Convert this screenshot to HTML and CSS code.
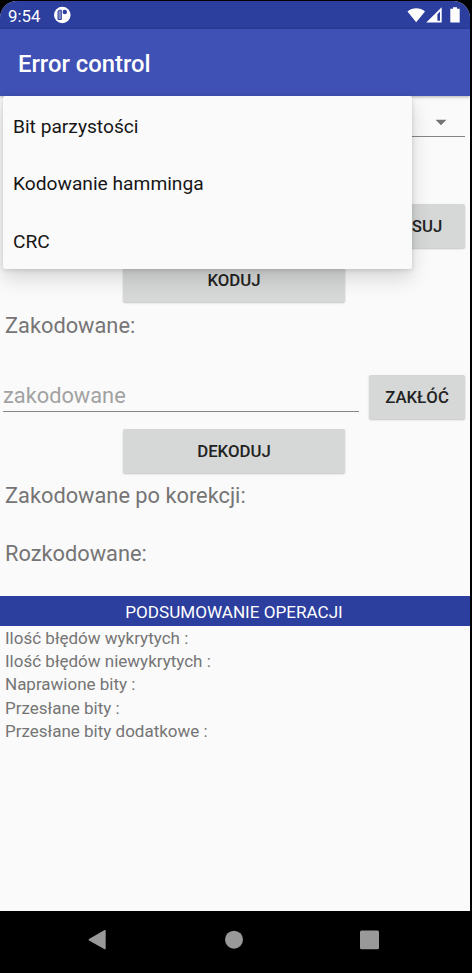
FILE: index.html
```html
<!DOCTYPE html>
<html lang="pl">
<head>
<meta charset="utf-8">
<title>Error control</title>
<link rel="stylesheet" href="styles.css">
</head>
<body>
<div class="device">
  <div class="screen">
    <header class="status">
      <span class="clock">9:54</span>
      <svg class="notice" width="18" height="18" viewBox="0 0 18 18"><circle cx="9.300" cy="9" r="8.300" fill="#fff"/><path d="M8.300 4.200H6.500Q5 4.200 5 6V13.500H8.300Z" fill="#8791c6" stroke="#2c3e9e" stroke-width="1"/><circle cx="11.800" cy="6" r="2.200" fill="#2c3e9e"/></svg>
      <svg class="signals" width="54" height="18" viewBox="0 0 54 18"><path d="M.5 5.500C5.500 1.200 13 1.200 18 5.500L9.200 16.200Z" fill="#fff"/><path d="M19.200 16.400 34.700 1.300V16.400ZM30.400 8.200V14.800H33V5.500Z" fill="#fff" fill-rule="evenodd"/><path d="M43.300 2.800H46V1.200H50V2.800H52.700V16.400H43.300Z" fill="#fff"/></svg>
    </header>
    <div class="appbar"><h1>Error control</h1></div>
    <main class="content">
      <div class="spinner"><svg width="12" height="7" viewBox="0 0 12 7"><path d="M.5.800H11.500L6 6.300Z" fill="#757575"/></svg></div>
      <div class="actions"><button class="btn side">LOSUJ</button></div>
      <button class="btn wide">KODUJ</button>
      <p class="label encoded">Zakodowane:</p>
      <div class="entry"><div class="field">zakodowane</div><button class="btn side">ZAKŁÓĆ</button></div>
      <button class="btn wide">DEKODUJ</button>
      <p class="label corrected">Zakodowane po korekcji:</p>
      <p class="label decoded">Rozkodowane:</p>
      <h2>PODSUMOWANIE OPERACJI</h2>
      <ul class="summary">
        <li>Ilość błędów wykrytych :</li>
        <li>Ilość błędów niewykrytych :</li>
        <li>Naprawione bity :</li>
        <li>Przesłane bity :</li>
        <li>Przesłane bity dodatkowe :</li>
      </ul>
      <ul class="menu">
        <li>Bit parzystości</li>
        <li>Kodowanie hamminga</li>
        <li>CRC</li>
      </ul>
    </main>
  </div>
  <nav class="navbar">
    <svg width="472" height="61" viewBox="0 0 472 61" fill="#999"><path d="M89 28 104.600 19.100Q105.700 18.700 105.700 19.800V37.500Q105.700 38.600 104.600 38.200L89 29.400Q88.100 28.700 89 28Z"/><circle cx="234" cy="28.700" r="9"/><rect x="360" y="19.500" width="19" height="18.700" rx="1.500"/></svg>
  </nav>
</div>
</body>
</html>
```
FILE: styles.css
```css
* { box-sizing: border-box; }
body { margin: 0; background: #000; font-family: Roboto, sans-serif; }
h1, h2, p, ul { margin: 0; padding: 0; list-style: none; }
.device { width: 472px; height: 973px; padding-top: 1px; overflow: hidden; background: #000; display: flex; flex-direction: column; }
.screen { width: 470px; height: 910px; background: #fafafa; border-radius: 17px 17px 0 0; overflow: hidden; display: flex; flex-direction: column; flex: none; }
.status { height: 28px; flex: none; background: #2c3e9e; display: flex; align-items: center; padding: 0 9px 0 8px; color: #fff; }
.clock { font-size: 16.800px; width: 45px; padding-top: 1px; }
.notice { display: block; }
.signals { display: block; margin-left: auto; }
.appbar { height: 67px; flex: none; background: #4051b5; padding: 3px 0 0 18px; display: flex; align-items: center; color: #fff; position: relative; box-shadow: 0 1px 3px rgba(0,0,0,.3); }
h1 { font-size: 23.800px; font-weight: 500; line-height: 28px; }
.content { position: relative; flex: 1; display: flex; flex-direction: column; padding-top: 1px; }
.spinner { height: 40px; margin: 0 5px; border-bottom: 1px solid #858585; display: flex; justify-content: flex-end; align-items: center; padding: 12px 18px 0 0; }
.actions { display: flex; justify-content: flex-end; margin: 67px 5px 10px; }
.btn { display: block; flex: none; height: 44px; padding: 0; border: 0; border-radius: 2px; background: #d6d8d7; color: #222; font: 500 16.800px/44px Roboto, sans-serif; text-align: center; box-shadow: 0 1px 2px rgba(0,0,0,.22); }
.side { width: 96px; }
.wide { width: 222px; margin-left: 123px; line-height: 45px; }
.label { padding-left: 5px; color: #757575; font-size: 21.800px; line-height: 30px; }
.encoded { margin-top: 9px; }
.entry { display: flex; margin: 34px 5px 10px 3px; justify-content: space-between; }
.field { width: 356px; height: 37px; border-bottom: 1px solid #858585; color: #a2a2a2; font-size: 21.800px; line-height: 42px; }
.corrected { margin-top: 8px; }
.decoded { margin-top: 28px; }
h2 { height: 30px; margin-top: 27px; flex: none; background: #2c3e9e; color: #fff; font-size: 17.100px; font-weight: 400; line-height: 33px; text-align: center; padding-right: 2px; }
.summary { padding: 1px 0 0 5px; color: #757575; font-size: 17px; line-height: 23.200px; }
.menu { position: absolute; top: 0; left: 3px; width: 409px; height: 173px; background: #fafafa; border-radius: 2px; box-shadow: 0 9px 20px rgba(0,0,0,.15), 0 1px 5px rgba(0,0,0,.14); color: #161616; font-size: 19.200px; line-height: 57.500px; padding: 1.500px 0 0 10px; }
.navbar { height: 61px; }
.navbar svg { display: block; }
```
